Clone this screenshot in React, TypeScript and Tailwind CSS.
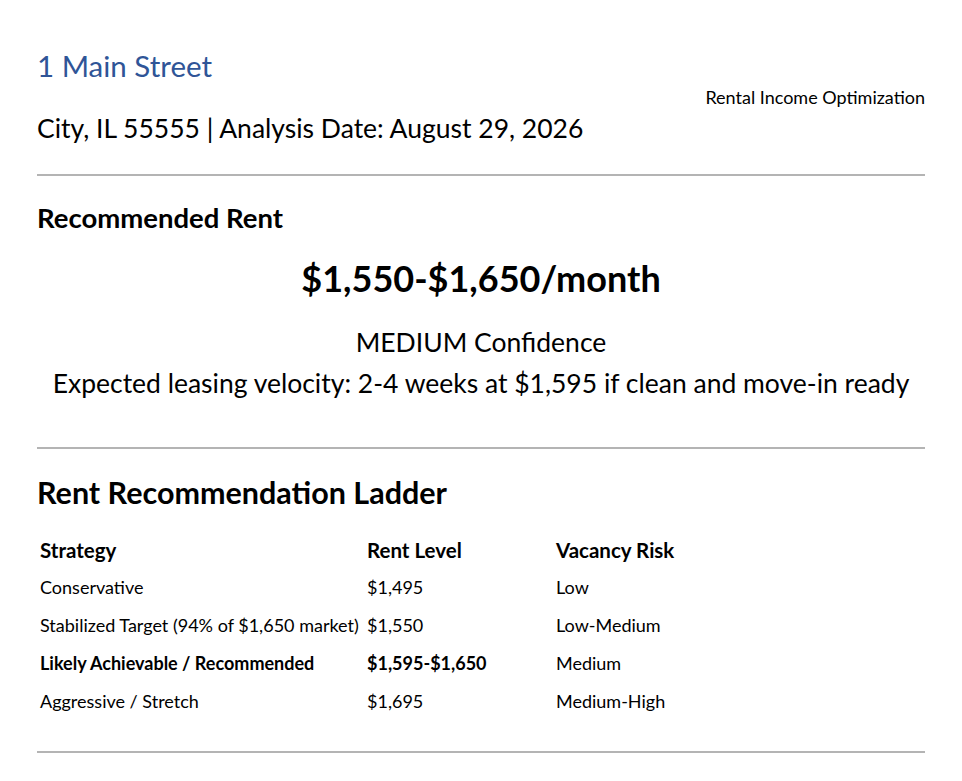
export default function App() {
  const rows = [
    ["Conservative", "$1,495", "Low", false],
    ["Stabilized Target (94% of $1,650 market)", "$1,550", "Low-Medium", false],
    ["Likely Achievable / Recommended", "$1,595-$1,650", "Medium", true],
    ["Aggressive / Stretch", "$1,695", "Medium-High", false],
  ] as const;
  return (
    <div className="w-[962px] h-[781px] bg-white text-black px-[37px] pt-[46px]" style={{ fontFamily: "Lato, 'Noto Sans', sans-serif" }}>
      <div className="flex justify-between items-start">
        <div>
          <div className="text-[29.5px] leading-[40px] text-[#2f5597]">1 Main Street</div>
          <div className="text-[26.5px] leading-[34px] mt-[25px]">City, IL 55555 | Analysis Date: August 29, 2026</div>
        </div>
        <div className="text-[18px] leading-[24px] mt-[39px]">Rental Income Optimization</div>
      </div>
      <div className="h-[2px] bg-[#b4b4b4] mt-[29px]" />
      <div className="text-[27.5px] font-bold leading-[34px] mt-[25px]">Recommended Rent</div>
      <div className="text-center text-[36px] font-bold leading-[46px] mt-[20px]">$1,550-$1,650/month</div>
      <div className="text-center text-[26.5px] leading-[34px] mt-[24px]">MEDIUM Confidence</div>
      <div className="text-center text-[26.5px] leading-[34px] mt-[7px]">Expected leasing velocity: 2-4 weeks at $1,595 if clean and move-in ready</div>
      <div className="h-[2px] bg-[#b4b4b4] mt-[47px]" />
      <div className="text-[30.5px] font-bold leading-[40px] mt-[23px]">Rent Recommendation Ladder</div>
      <div className="mt-[23px] pl-[3px]">
        <div className="grid grid-cols-[327px_189px_1fr] text-[20.5px] font-bold leading-[30px]">
          <div>Strategy</div><div>Rent Level</div><div>Vacancy Risk</div>
        </div>
        <div className="mt-[3px]">
          {rows.map(([a, b, c, bold]) => (
            <div key={a} className={`grid grid-cols-[327px_189px_1fr] text-[18px] leading-[38px] ${bold ? "font-bold" : ""}`}>
              <div className="whitespace-nowrap">{a}</div><div>{b}</div><div className="font-normal">{c}</div>
            </div>
          ))}
        </div>
      </div>
      <div className="h-[2px] bg-[#b4b4b4] mt-[31px]" />
    </div>
  );
}
